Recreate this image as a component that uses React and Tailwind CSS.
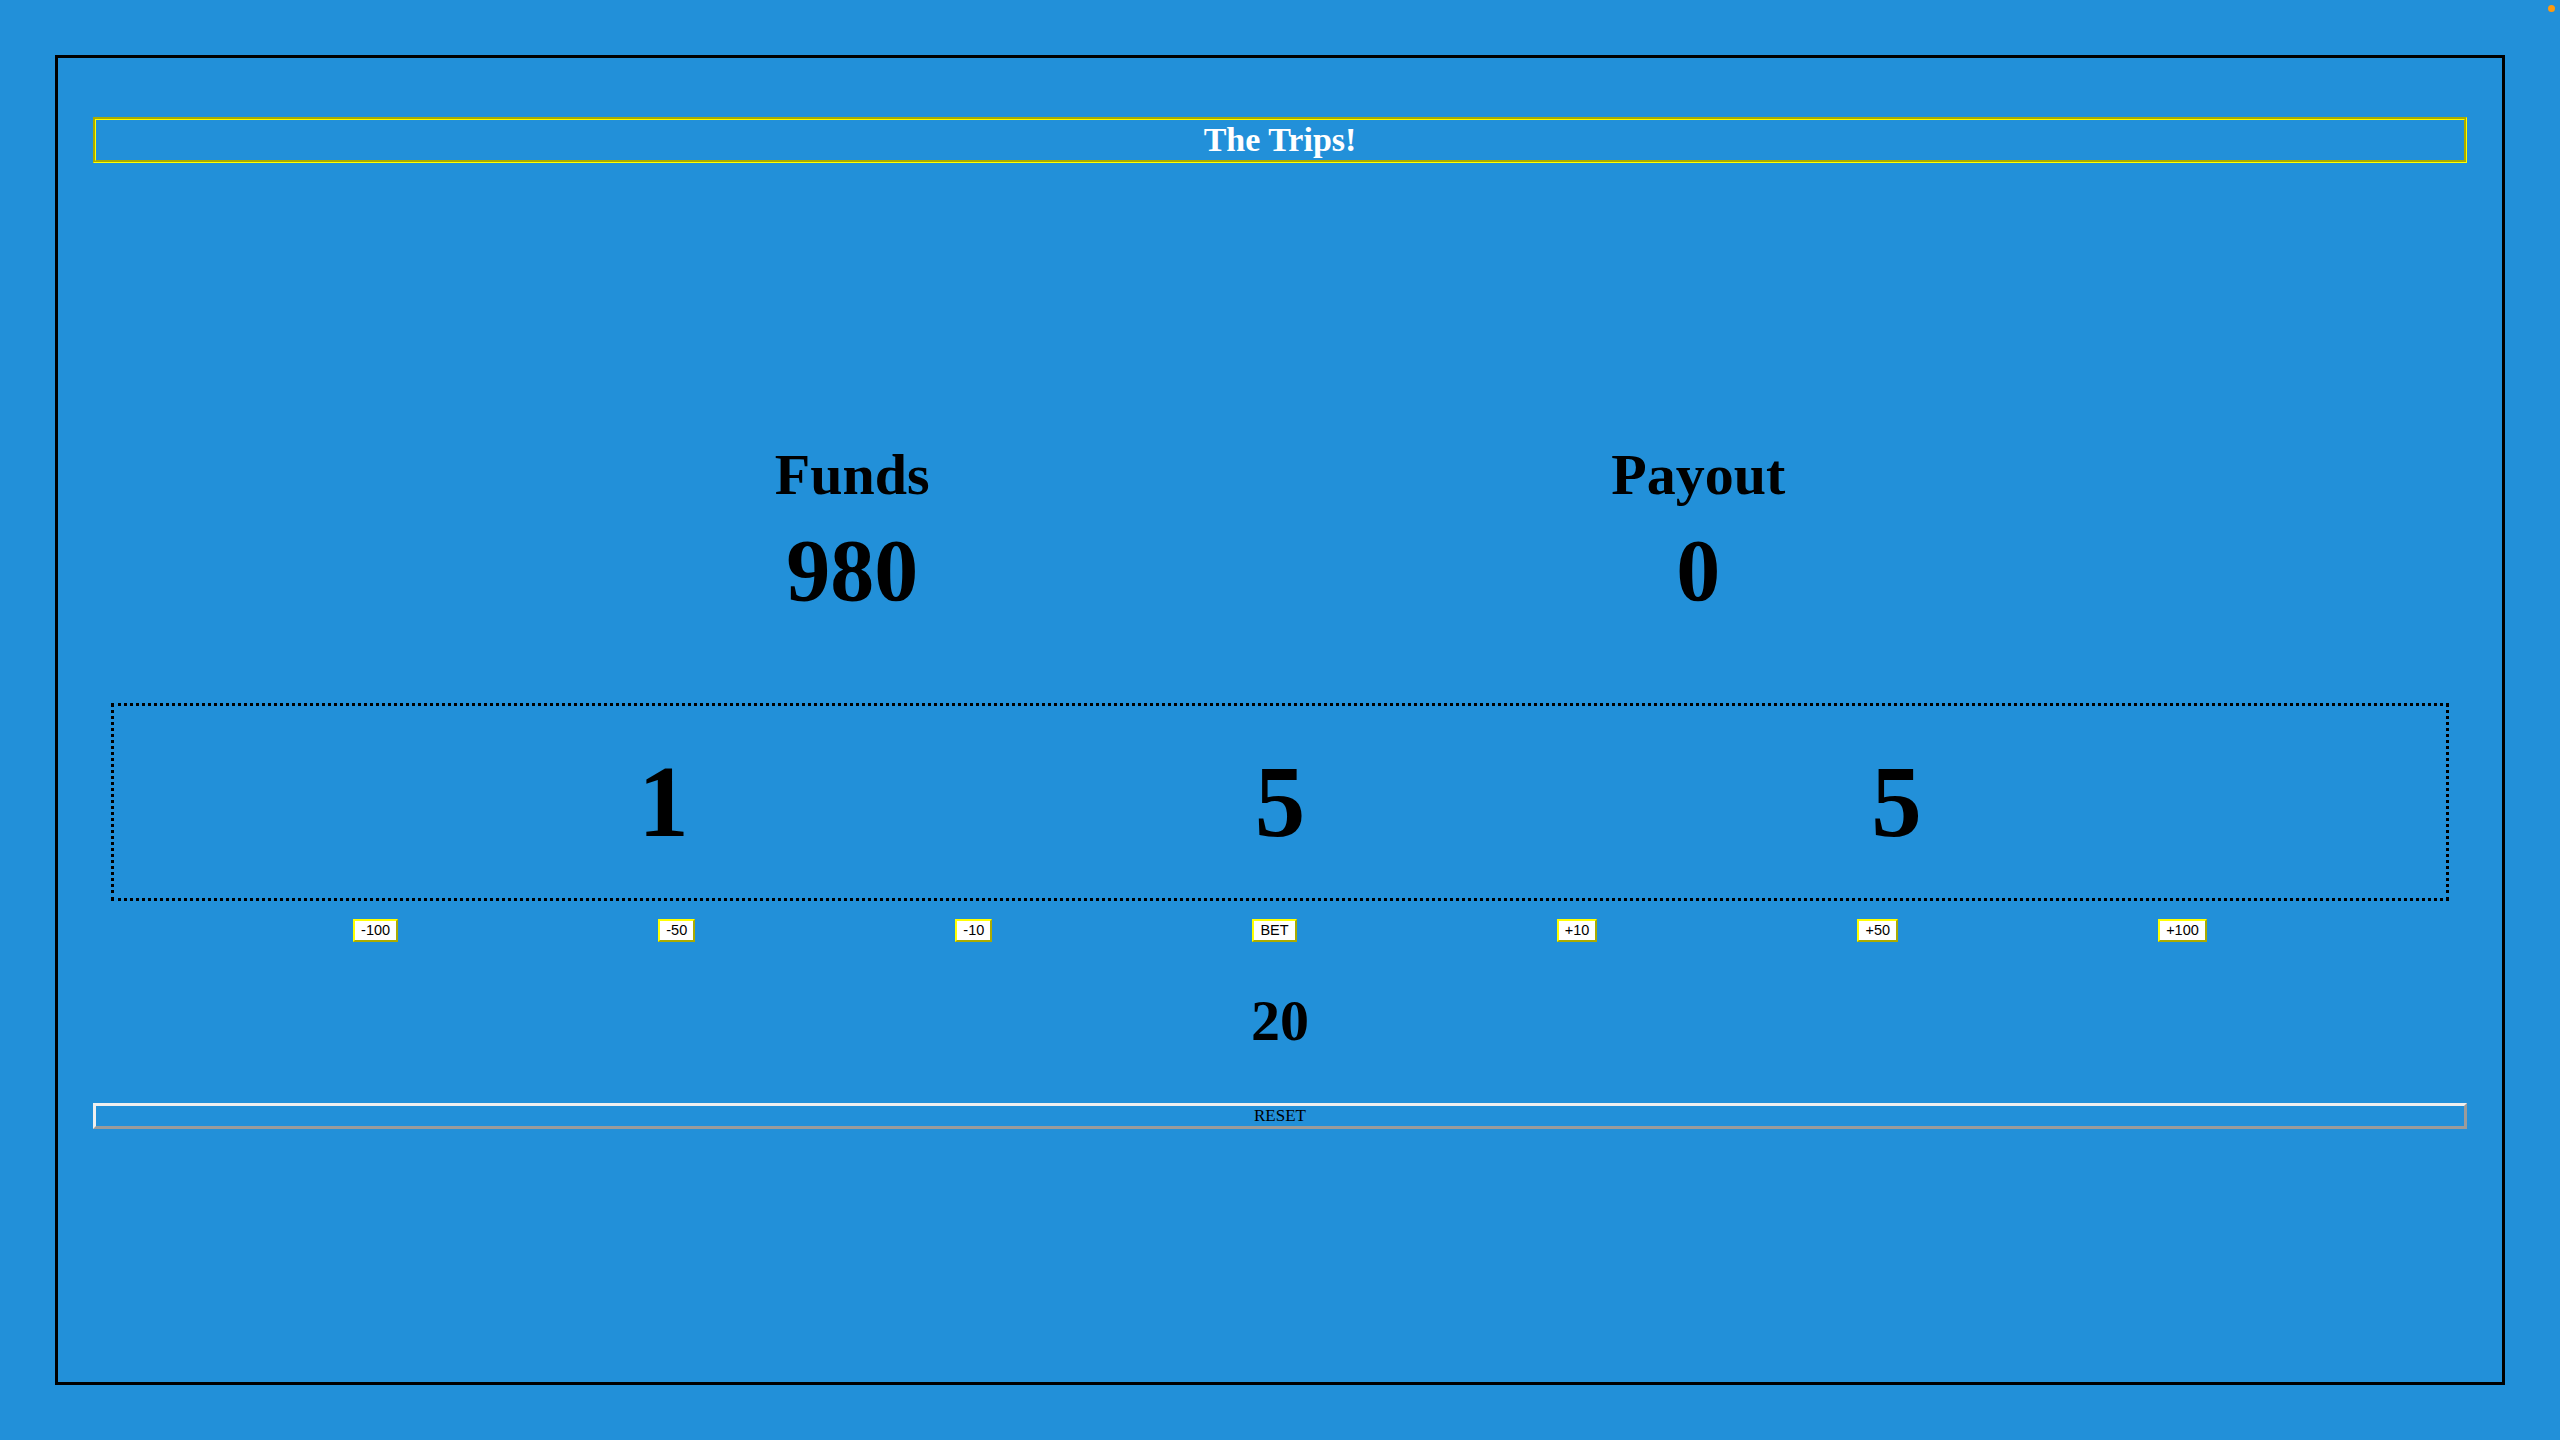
export default function App() {
  const bets = ["-100", "-50", "-10", "BET", "+10", "+50", "+100"];
  const dice = ["1", "5", "5"];
  return (
    <div className="relative min-h-screen w-full overflow-hidden bg-[#2290d9] pl-[55px] pt-[55px] font-['Liberation_Serif',serif] text-black">
      <span className="absolute right-[5px] top-[5px] h-[7px] w-[7px] rounded-full bg-[#ff9a10]" />
      <div className="flex h-[1330px] w-[2450px] flex-col border-[3px] border-black px-[35px]">
        <div className="mt-[59px] flex h-[46px] items-center justify-center border-[3px] border-[#ffff00] [border-style:groove]">
          <h1 className="text-[34px] font-bold leading-none text-white">The Trips!</h1>
        </div>

        <div className="mt-[283px] flex justify-evenly">
          <div className="flex flex-col items-center">
            <h2 className="text-[58px] font-bold leading-none">Funds</h2>
            <div className="mt-[23px] text-[88px] font-bold leading-none">980</div>
          </div>
          <div className="flex flex-col items-center">
            <h2 className="text-[58px] font-bold leading-none">Payout</h2>
            <div className="mt-[23px] text-[88px] font-bold leading-none">0</div>
          </div>
        </div>

        <div className="mx-[18px] mt-[88px] flex h-[198px] items-center justify-evenly border-[3px] border-dotted border-black">
          {dice.map((d, i) => (
            <div key={i} className="w-[134px] text-center text-[101px] font-bold leading-none">
              {d}
            </div>
          ))}
        </div>

        <div className="mt-[18px] flex justify-evenly">
          {bets.map((b) => (
            <button
              key={b}
              className="border-2 border-[#ffff00] bg-white px-[6px] py-[1px] font-['Liberation_Sans',Arial,sans-serif] text-[14.5px] leading-[1.15] text-black [border-style:outset]"
            >
              {b}
            </button>
          ))}
        </div>

        <div className="mt-[50px] text-center text-[58px] font-bold leading-none">20</div>

        <button className="mt-[53px] flex h-[26px] w-full items-center justify-center border-[3px] border-[#efefef] bg-transparent font-['Liberation_Serif',serif] text-[17px] leading-none text-black [border-style:outset]">
          RESET
        </button>
      </div>
    </div>
  );
}
